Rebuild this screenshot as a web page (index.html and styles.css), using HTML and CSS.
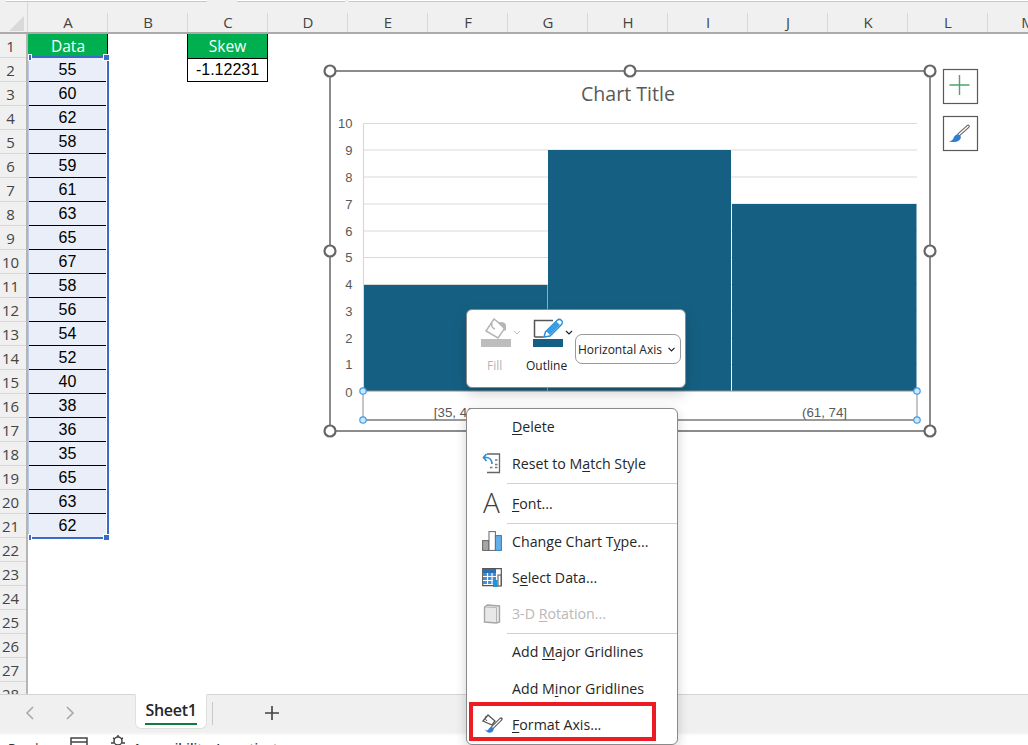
FILE: index.html
```html
<!DOCTYPE html>
<html lang="en">
<head>
<meta charset="utf-8">
<title>Sheet1</title>
<link rel="stylesheet" href="styles.css">
</head>
<body>
<div class="page">
  <div class="topstrip"><span class="tb tb1"></span><span class="tb tb2"></span><span class="tb tb3"></span></div>
  <div class="colheads">
    <div class="corner"><svg width="28" height="31" viewBox="0 0 28 31"><path d="M24 14V29H9Z" fill="#d9d9d9"/></svg></div>
    <div class="ch">A</div><div class="ch">B</div><div class="ch">C</div><div class="ch">D</div><div class="ch">E</div><div class="ch">F</div><div class="ch">G</div><div class="ch">H</div><div class="ch">I</div><div class="ch">J</div><div class="ch">K</div><div class="ch">L</div><div class="ch">M</div>
  </div>
  <div class="sheet">
    <div class="rowheads">
      <div class="rh">1</div><div class="rh">2</div><div class="rh">3</div><div class="rh">4</div><div class="rh">5</div><div class="rh">6</div><div class="rh">7</div><div class="rh">8</div><div class="rh">9</div><div class="rh">10</div><div class="rh">11</div><div class="rh">12</div><div class="rh">13</div><div class="rh">14</div><div class="rh">15</div><div class="rh">16</div><div class="rh">17</div><div class="rh">18</div><div class="rh">19</div><div class="rh">20</div><div class="rh">21</div><div class="rh">22</div><div class="rh">23</div><div class="rh">24</div><div class="rh">25</div><div class="rh">26</div><div class="rh">27</div><div class="rh">28</div>
    </div>
    <div class="col">
      <div class="cell head">Data</div>
      <div class="cell data">55</div><div class="cell data">60</div><div class="cell data">62</div><div class="cell data">58</div><div class="cell data">59</div><div class="cell data">61</div><div class="cell data">63</div><div class="cell data">65</div><div class="cell data">67</div><div class="cell data">58</div><div class="cell data">56</div><div class="cell data">54</div><div class="cell data">52</div><div class="cell data">40</div><div class="cell data">38</div><div class="cell data">36</div><div class="cell data">35</div><div class="cell data">65</div><div class="cell data">63</div><div class="cell data last">62</div>
    </div>
    <div class="col"></div>
    <div class="col col-skew">
      <div class="cell head">Skew</div>
      <div class="cell boxed">-1.12231</div>
    </div>
  </div>
  <div class="sheetbar">
    <svg class="nav" width="80" height="20" viewBox="0 0 80 20"><path d="M33 4l-6 6 6 6" fill="none" stroke="#a6a6a6" stroke-width="1.5"/><path d="M67 4l6 6-6 6" fill="none" stroke="#a6a6a6" stroke-width="1.5"/></svg>
    <div class="tab"><span class="tabname">Sheet1</span></div>
    <div class="tabsep"></div>
    <svg class="addsheet" width="16" height="16" viewBox="0 0 16 16"><path d="M8 1v14M1 8h14" stroke="#404040" stroke-width="1.6"/></svg>
  </div>
  <div class="statusbar">
    <span class="ready">Ready</span>
    <svg class="st-ic" width="18" height="12" viewBox="0 0 18 12"><path d="M1 1h16v11H1zM1 5h16" fill="none" stroke="#444" stroke-width="1.5"/></svg>
    <svg class="st-ic2" width="16" height="12" viewBox="0 0 16 12"><circle cx="8" cy="6" r="4" fill="none" stroke="#444" stroke-width="1.5"/><path d="M3 3l2 1M13 3l-2 1M8 0v2M1 8h3M15 8h-3" stroke="#444" stroke-width="1.5"/></svg>
    <span class="access">Accessibility: Investigate</span>
  </div>

  <div class="sel">
    <span class="hd hd-tl"></span><span class="hd hd-tr"></span><span class="hd hd-bl"></span><span class="hd hd-br"></span>
  </div>

  <svg class="chart" width="670" height="390" viewBox="320 60 670 390">
    <rect x="330" y="71" width="600" height="360" fill="#fff" stroke="#666" stroke-width="1.5"/>
    <text x="628" y="101" class="ctitle" text-anchor="middle">Chart Title</text>
    <g stroke="#d9d9d9" stroke-width="1.2">
      <path d="M363 123.500H917M363 150H917M363 177H917M363 204H917M363 231H917M363 257.500H917M363 284.500H917M363 311H917M363 338H917M363 364.500H917M363.500 123V391"/>
    </g>
    <rect x="364" y="285" width="183.500" height="106" fill="#156082"/>
    <rect x="548" y="150" width="183" height="241" fill="#156082"/>
    <rect x="732" y="204" width="184.500" height="187" fill="#156082"/>
    <g class="ytick" text-anchor="end">
      <text x="352.500" y="128">10</text><text x="352.500" y="155">9</text><text x="352.500" y="182">8</text><text x="352.500" y="209">7</text><text x="352.500" y="236">6</text><text x="352.500" y="262">5</text><text x="352.500" y="289">4</text><text x="352.500" y="316">3</text><text x="352.500" y="343">2</text><text x="352.500" y="369">1</text><text x="352.500" y="397">0</text>
    </g>
    <g class="xtick" text-anchor="middle">
      <text x="456" y="417">[35, 48]</text><text x="640" y="417">(48, 61]</text><text x="824.500" y="417">(61, 74]</text>
    </g>
    <path d="M363 391H917" stroke="#8c8c8c" stroke-width="1"/>
    <path d="M363 391V420H917V391" fill="none" stroke="#8c8c8c" stroke-width="1"/>
    <path d="M363 420H917" stroke="#707070" stroke-width="1"/>
    <g fill="#cfe6fb" stroke="#3d9be9" stroke-width="1.2">
      <circle cx="363" cy="391" r="3.200"/><circle cx="917" cy="391" r="3.200"/><circle cx="363" cy="420" r="3.200"/><circle cx="917" cy="420" r="3.200"/>
    </g>
    <g fill="#fff" stroke="#666" stroke-width="2.200">
      <circle cx="330" cy="71" r="5.500"/><circle cx="630" cy="71" r="5.500"/><circle cx="930" cy="71" r="5.500"/><circle cx="330" cy="251" r="5.500"/><circle cx="930" cy="251" r="5.500"/><circle cx="330" cy="431" r="5.500"/><circle cx="630" cy="431" r="5.500"/><circle cx="930" cy="431" r="5.500"/>
    </g>
    <rect x="943.500" y="69.500" width="34" height="34" fill="#fff" stroke="#595959" stroke-width="1.2"/>
    <path d="M959.500 75v20M949.500 85h20" stroke="#4ea468" stroke-width="1.400"/>
    <rect x="943.500" y="116.500" width="34" height="34" fill="#fff" stroke="#595959" stroke-width="1.2"/>
    <path d="M959 134.500l9-8" stroke="#666" stroke-width="3.600" stroke-linecap="round"/>
    <path d="M959 134.500l9-8" stroke="#fff" stroke-width="1.400" stroke-linecap="round"/>
    <path d="M949 141.500c3-.5 4-2 5-4.500 1-2 3-3 5.500-2 2 1 1.500 4 0 5-3 2.500-7 2.500-10.500 1.500z" fill="#2f7fd1"/>
  </svg>

  <div class="mini">
    <div class="mini-tool fill">
      <svg width="40" height="30" viewBox="0 0 40 30"><path d="M5 13L13 1l11 9-7 10z" fill="#fff" stroke="#b5b5b5" stroke-width="1.500"/><path d="M11 5c-1 3 0 5 3 6" fill="none" stroke="#b5b5b5" stroke-width="1.500"/><path d="M17 5c3-2 7-1 8 2v5l-2 1-1-3z" fill="#b5b5b5"/><rect x="0" y="21" width="30" height="8" fill="#bdbdbd"/><path d="M33 13l3 3 3-3" fill="none" stroke="#bdbdbd" stroke-width="1"/></svg>
      <span>Fill</span>
    </div>
    <div class="mini-tool outline">
      <svg width="40" height="30" viewBox="0 0 40 30"><path d="M1.500 19V2.500H20" fill="none" stroke="#555" stroke-width="1.500"/><path d="M1.500 19h9" stroke="#555" stroke-width="1.500"/><path d="M11 19l1.500-5L24 2.500c1.500-1.500 3.500-1 4.500 0s1 3 0 4L17 18z" fill="#fff" stroke="#2b8fd8" stroke-width="1.500"/><path d="M13 13l10-10 4 4-10 10z" fill="#3a9ee4"/><rect x="0" y="21" width="30" height="8" fill="#156082"/><path d="M33 13l3 3 3-3" fill="none" stroke="#222" stroke-width="1.200"/></svg>
      <span>Outline</span>
    </div>
    <div class="pick">Horizontal Axis<svg width="7" height="5" viewBox="0 0 7 5"><path d="M.5 .8l3 3 3-3" fill="none" stroke="#222" stroke-width="1.200"/></svg></div>
  </div>

  <div class="menu">
    <div class="mi"><span class="ic"></span><span><u>D</u>elete</span></div>
    <div class="mi"><span class="ic"><svg width="20" height="22" viewBox="0 0 20 22"><path d="M5 2h12.500v18.500H5" fill="#fff" stroke="#666" stroke-width="1.300"/><path d="M13 8h2.500M13 12.500h2.500M8 15.500h2.500M13 15.500h2.500" stroke="#777" stroke-width="1.600"/><path d="M10 12c0-4-2.500-6.500-6-6.500H1.500M4.500 2L1.500 5.500 4.500 9" fill="none" stroke="#2b8fd8" stroke-width="1.700"/></svg></span><span>Reset to M<u>a</u>tch Style</span></div>
    <div class="sep sep-wide"></div>
    <div class="mi"><span class="ic bigA">A</span><span><u>F</u>ont...</span></div>
    <div class="sep"></div>
    <div class="mi"><span class="ic"><svg width="20" height="20" viewBox="0 0 20 20"><rect x=".6" y="9.600" width="6.400" height="9.800" fill="#a6a6a6" stroke="#666"/><rect x="7" y=".6" width="6.400" height="18.800" fill="#fff" stroke="#666"/><rect x="13.400" y="4.600" width="6" height="14.800" fill="#64aee8" stroke="#2b7fc4"/></svg></span><span>Change Chart T<u>y</u>pe...</span></div>
    <div class="mi"><span class="ic"><svg width="20" height="19" viewBox="0 0 20 19"><path d="M.7 .7h18.600v17H.7z" fill="#fff" stroke="#555" stroke-width="1.200"/><rect x="1" y="1" width="13" height="4" fill="#2b6fb5"/><path d="M1 5h13v11H1z" fill="#3a8fd8"/><path d="M5.500 5v11M10 5v11M1 8.500h13M1 12.500h13" stroke="#fff" stroke-width="1.200"/><rect x="16" y="7" width="3" height="11" fill="#fff" stroke="#555"/><rect x="11" y="12" width="4.500" height="7" fill="#2b8fd8"/></svg></span><span>S<u>e</u>lect Data...</span></div>
    <div class="mi disabled"><span class="ic"><svg width="18" height="20" viewBox="0 0 18 20"><path d="M1.500 3l3-2 12 1v16l-3 1-12-1z" fill="#e8e8e8" stroke="#a6a6a6" stroke-width="1.400"/><path d="M13.500 3.500V19M1.500 3l12 .5" stroke="#b5b5b5"/></svg></span><span>3-D <u>R</u>otation...</span></div>
    <div class="sep"></div>
    <div class="mi"><span class="ic"></span><span>Add <u>M</u>ajor Gridlines</span></div>
    <div class="mi"><span class="ic"></span><span>Add M<u>i</u>nor Gridlines</span></div>
    <div class="mi"><span class="ic"><svg width="22" height="22" viewBox="0 0 22 22"><path d="M2 8l5-6 7 6-3 4z" fill="#fff" stroke="#555" stroke-width="1.300"/><path d="M5 3c-1 2-1 3 1 5" fill="none" stroke="#555"/><path d="M11 15l9-9" stroke="#555" stroke-width="3.200" stroke-linecap="round"/><path d="M11 15l9-9" stroke="#fff" stroke-width="1.200"/><path d="M3 15c1 2 3 3 4 2 1-2 2-3 4-3 2 1 2 3 1 4-2 3-7 2-9-3z" fill="#2f7fd1"/></svg></span><span><u>F</u>ormat Axis...</span></div>
  </div>
  <div class="redbox"></div>
</div>
</body>
</html>
```
FILE: styles.css
```css
* { box-sizing: border-box; }
html, body { margin: 0; padding: 0; background: #fff; }
.page {
  position: relative;
  display: flex;
  flex-direction: column;
  width: 1028px;
  height: 745px;
  overflow: hidden;
  font-family: "Open Sans", "Noto Sans", sans-serif;
  color: #262626;
}
.topstrip {
  display: flex;
  flex: none;
  height: 2px;
  background: #f0f0f0;
}
.tb { height: 2px; background: #fff; border-bottom: 1px solid #c8c8c8; }
.tb1 { width: 201px; margin-left: 6px; }
.tb2 { width: 108px; margin-left: 30px; }
.tb3 { flex: 1; margin-left: 4px; }
.colheads {
  display: flex;
  flex: none;
  height: 32px;
  background: #f0f0f0;
  border-bottom: 2px solid #ababab;
}
.corner { flex: none; width: 28px; border-right: 1px solid #d8d8d8; }
.corner svg { display: block; }
.ch {
  flex: none;
  width: 80px;
  padding-top: 11px;
  text-align: center;
  font-size: 15px;
  line-height: 19px;
  color: #444;
  background: linear-gradient(#d8d8d8, #d8d8d8) right 11px / 1px 19px no-repeat;
}
.sheet {
  display: flex;
  flex: none;
  height: 660px;
  overflow: hidden;
}
.rowheads {
  flex: none;
  width: 28px;
  background: #f0f0f0;
  border-right: 2px solid #b5b5b5;
}
.rh {
  height: 24px;
  padding-right: 5px;
  text-align: center;
  font-size: 15px;
  line-height: 24px;
  color: #444;
  border-bottom: 1px solid #d8d8d8;
}
.col { flex: none; width: 80px; }
.col-skew { width: 81px; margin-left: -1px; }
.cell {
  height: 24px;
  text-align: center;
  font-family: "Liberation Sans", Arial, sans-serif;
  font-size: 16px;
  line-height: 24px;
  color: #000;
}
.head {
  background: #00b050;
  color: #fff;
  font-family: "Open Sans", sans-serif;
  font-size: 15.500px;
  line-height: 24px;
  border-right: 1px solid #000;
  border-left: 1px solid #00b050;
}
.col-skew .head { border-left-color: #000; }
.data {
  margin: 0 2px 0 1px;
  background: #e9eef8;
  border-bottom: 1px solid #000;
}
.last { border-bottom: 0; }
.boxed { background: #fff; border: 1px solid #000; line-height: 22px; }
.sheetbar {
  position: relative;
  display: flex;
  align-items: flex-start;
  flex: none;
  height: 41px;
  background: #f0f0f0;
  border-top: 1px solid #d4d4d4;
  border-bottom: 2px solid #f8f8f8;
}
.nav { flex: none; margin: 8px 55px 0 0; }
.tab {
  flex: none;
  width: 72px;
  height: 35px;
  margin-top: -1px;
  padding-top: 4px;
  text-align: center;
  background: #fff;
  border: 1px solid #e0e0e0;
  border-top-color: #fff;
  border-radius: 0 0 6px 6px;
}
.tabname {
  display: inline-block;
  font-size: 16px;
  font-weight: 600;
  line-height: 22px;
  letter-spacing: -.3px;
  color: #262626;
  padding-bottom: 2px;
  border-bottom: 2px solid #107c41;
}
.tabsep { flex: none; width: 1px; height: 23px; margin: 7px 0 0 5px; background: #c8c8c8; }
.addsheet { flex: none; margin: 10px 0 0 51px; }
.statusbar {
  position: relative;
  flex: none;
  height: 10px;
  overflow: hidden;
  background: #fff;
  font-size: 13px;
  line-height: 18px;
  color: #333;
}
.ready { position: absolute; left: 8px; top: 4px; }
.st-ic { position: absolute; left: 70px; top: 2px; }
.st-ic2 { position: absolute; left: 110px; top: 0; }
.access { position: absolute; left: 133px; top: 4px; font-weight: 600; }
.sel {
  position: absolute;
  left: 28px;
  top: 56px;
  width: 81px;
  height: 483px;
  border: 2px solid #3a6cc5;
  border-left: 1px solid #b9c9e8;
}
.hd { position: absolute; background: #3a6cc5; border: 1px solid #fff; }
.hd-tl { left: -1px; top: -4px; width: 4px; height: 7px; }
.hd-tr { right: -3px; top: -4px; width: 7px; height: 7px; }
.hd-bl { left: -1px; bottom: -4px; width: 4px; height: 7px; }
.hd-br { right: -3px; bottom: -4px; width: 7px; height: 7px; }
.chart { position: absolute; left: 320px; top: 60px; }
.ctitle { font-family: "Open Sans", sans-serif; font-size: 19.600px; fill: #595959; }
.ytick { font-family: "Liberation Sans", Arial, sans-serif; font-size: 13px; fill: #595959; }
.xtick { font-family: "Liberation Sans", Arial, sans-serif; font-size: 13.300px; fill: #595959; }
.mini {
  position: absolute;
  left: 466px;
  top: 309px;
  display: flex;
  width: 220px;
  height: 79px;
  background: #fff;
  border: 1px solid #8a8a8a;
  border-radius: 6px;
  box-shadow: 0 6px 14px rgba(0, 0, 0, .18);
}
.mini-tool {
  display: flex;
  flex: none;
  flex-direction: column;
  width: 40px;
  margin-top: 8px;
  font-size: 12px;
  line-height: 16px;
}
.mini-tool svg { display: block; flex: none; margin-bottom: 10px; }
.fill { margin-left: 14px; color: #b5b5b5; }
.fill span { padding-left: 6px; }
.outline { margin-left: 12px; margin-right: 2px; color: #222; }
.outline span { margin-left: -7px; }
.pick {
  display: flex;
  align-items: center;
  justify-content: space-between;
  flex: none;
  width: 106px;
  height: 30px;
  margin-top: 24px;
  padding: 0 5px 0 2px;
  font-size: 12px;
  color: #222;
  border: 1px solid #999;
  border-radius: 7px;
}
.menu {
  position: absolute;
  left: 466px;
  top: 408px;
  width: 212px;
  height: 337px;
  background: #fff;
  border: 1px solid #8a8a8a;
  border-radius: 6px;
  box-shadow: 0 4px 12px rgba(0, 0, 0, .18);
}
.mi {
  display: flex;
  align-items: center;
  height: 36.200px;
  padding-bottom: .5px;
  font-size: 14.200px;
  color: #262626;
}
.mi u { text-underline-offset: 2px; text-decoration-thickness: 1px; }
.ic {
  display: flex;
  align-items: center;
  justify-content: center;
  flex: none;
  width: 45px;
  padding-left: 4px;
}
.bigA { height: 36px; margin-top: -3px; font-size: 28px; font-weight: 300; color: #404040; line-height: 36px; }
.disabled { color: #b8b8b8; }
.sep { height: 1px; margin: 1px 0 0 40px; background: #d0d0d0; }
.sep-wide { margin: 1.500px 0 1.500px 40px; }
.redbox {
  position: absolute;
  left: 469px;
  top: 702px;
  width: 187px;
  height: 39px;
  border: 4px solid #ed1c24;
}
```
